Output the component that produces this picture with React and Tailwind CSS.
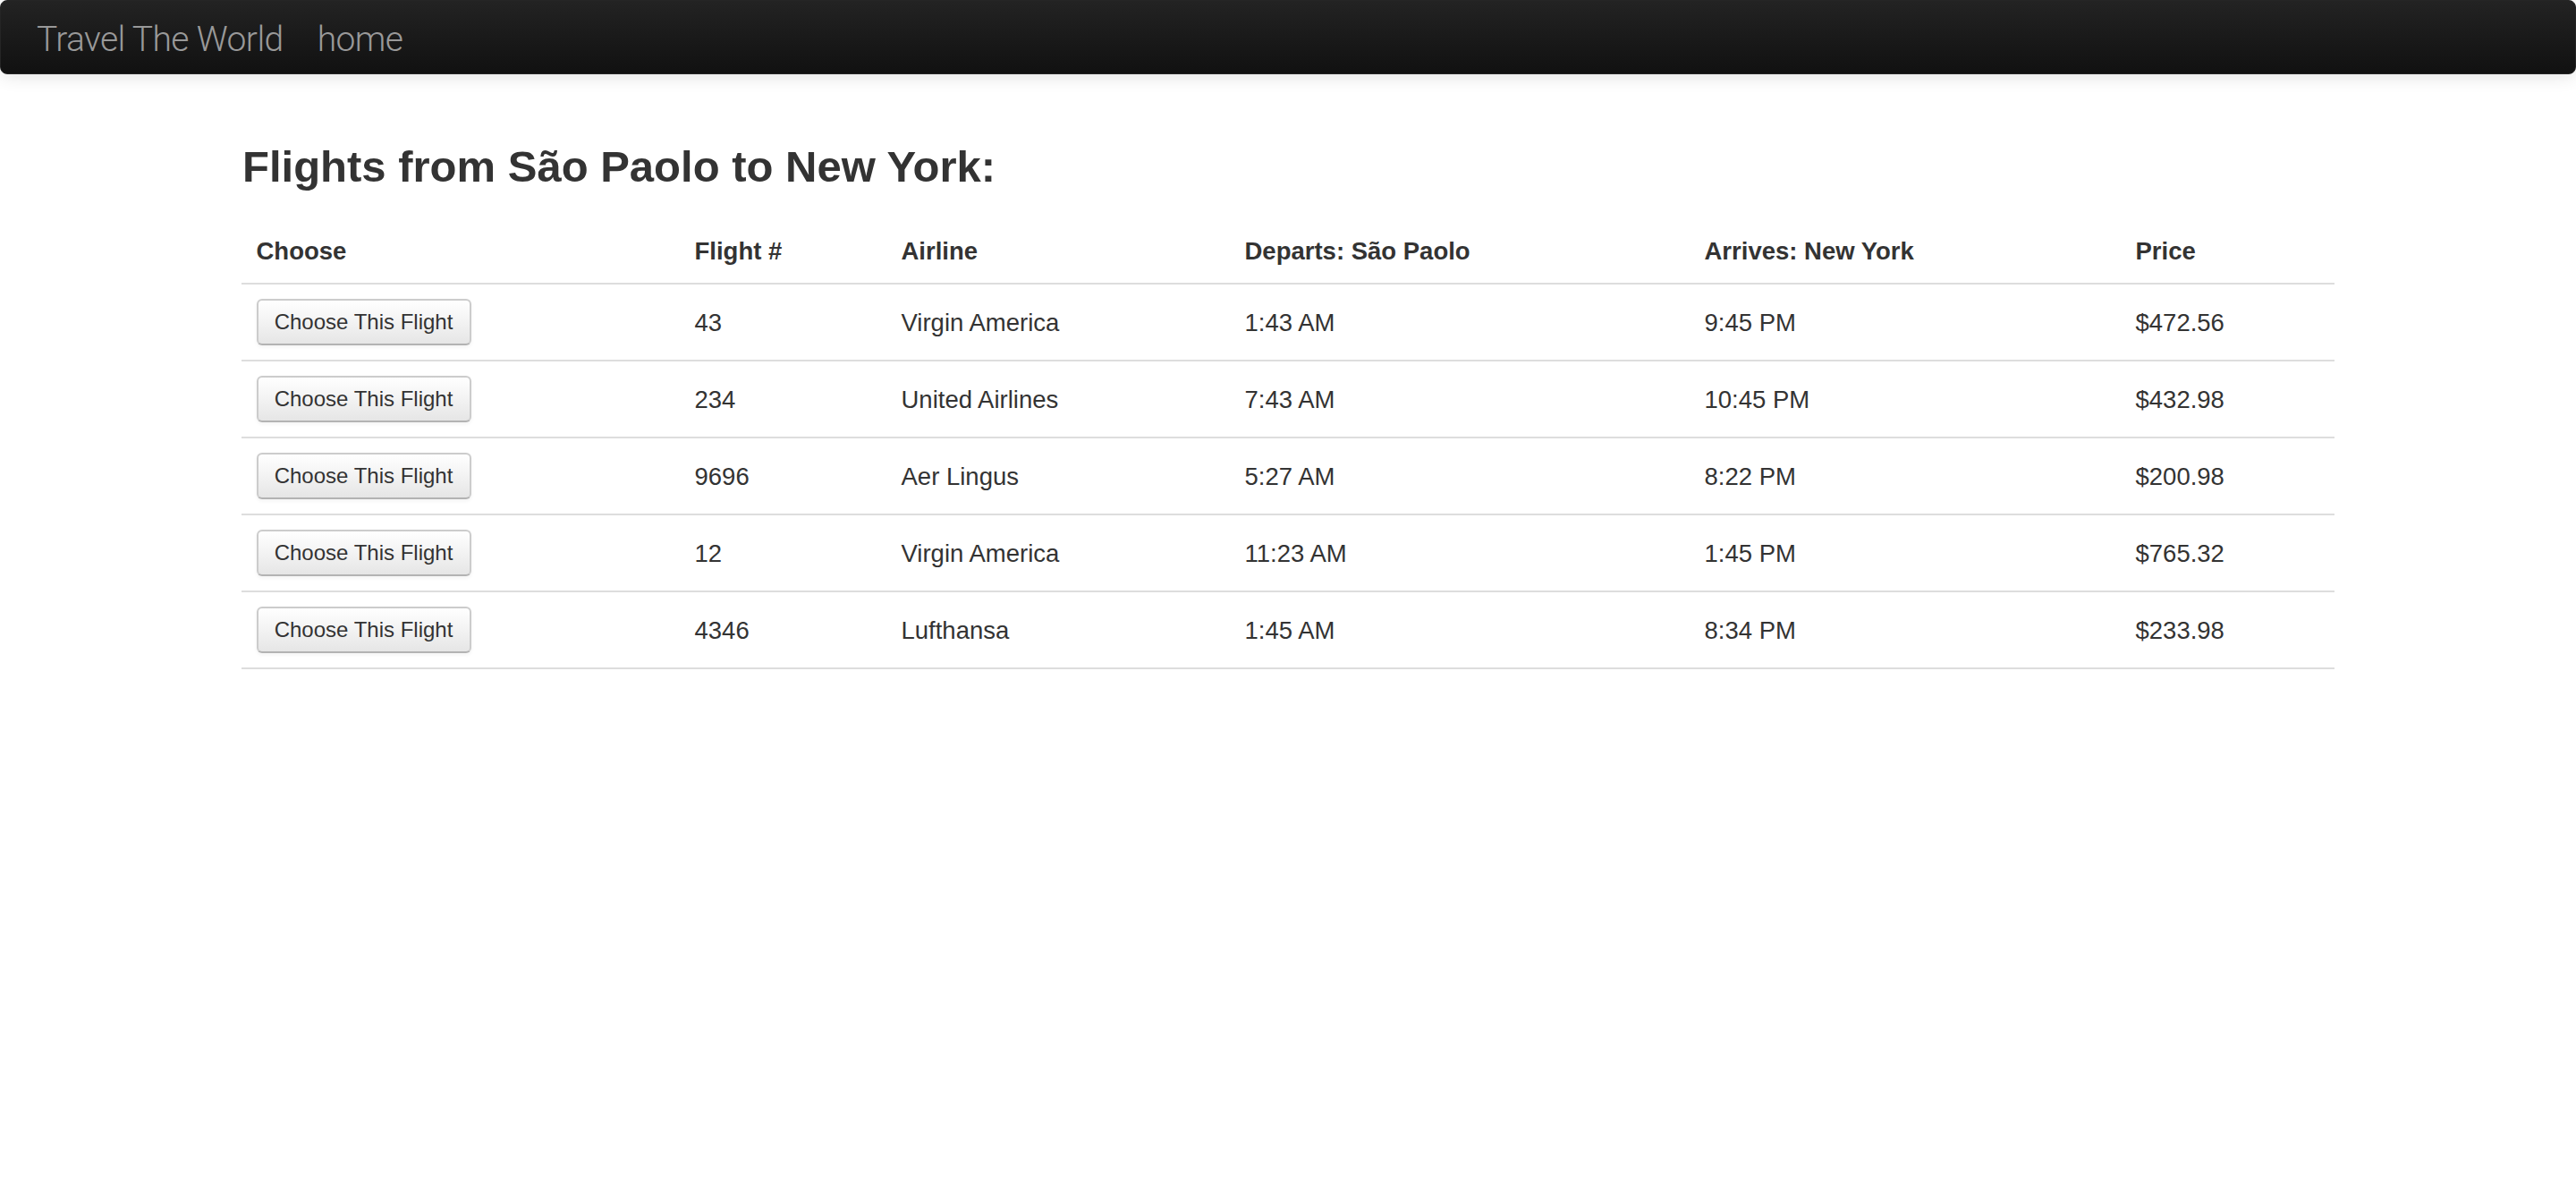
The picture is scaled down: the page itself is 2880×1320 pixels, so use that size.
import React from "react";

const flights = [
  { num: "43", airline: "Virgin America", dep: "1:43 AM", arr: "9:45 PM", price: "$472.56" },
  { num: "234", airline: "United Airlines", dep: "7:43 AM", arr: "10:45 PM", price: "$432.98" },
  { num: "9696", airline: "Aer Lingus", dep: "5:27 AM", arr: "8:22 PM", price: "$200.98" },
  { num: "12", airline: "Virgin America", dep: "11:23 AM", arr: "1:45 PM", price: "$765.32" },
  { num: "4346", airline: "Lufthansa", dep: "1:45 AM", arr: "8:34 PM", price: "$233.98" },
];

export default function App() {
  return (
    <div className="min-h-[1320px] bg-white text-[#333333] font-['Liberation_Sans',Arial,sans-serif]">
      <nav className="h-[83px] rounded-[8px] border border-[#252525] bg-gradient-to-b from-[#232323] to-[#111111] shadow-[0_2px_20px_rgba(0,0,0,0.12)] flex items-center pl-[40px] pt-[6px] font-['Roboto',sans-serif] font-light text-[#999999]">
        <span className="text-[39px] leading-[39px] tracking-[-0.6px]">Travel The World</span>
        <span className="ml-[38px] text-[39px] leading-[39px] tracking-[-0.6px]">home</span>
      </nav>
      <div className="mx-auto w-[2340px] pt-[79px]">
        <h3 className="text-[49px] leading-[48px] font-bold text-[#333333] pl-[1px] mb-[35px]">
          Flights from São Paolo to New York:
        </h3>
        <table className="w-[2340px] table-fixed border-collapse text-[27.5px] leading-[39px]">
          <colgroup>
            <col className="w-[490px]" />
            <col className="w-[231px]" />
            <col className="w-[384px]" />
            <col className="w-[514px]" />
            <col className="w-[482px]" />
            <col className="w-[239px]" />
          </colgroup>
          <thead>
            <tr className="border-b-2 border-[#dddddd]">
              <th className="text-left font-bold px-[16.5px] pt-[16px] pb-[16px] align-bottom">Choose</th>
              <th className="text-left font-bold px-[16.5px] pt-[16px] pb-[16px] align-bottom">Flight #</th>
              <th className="text-left font-bold px-[16.5px] pt-[16px] pb-[16px] align-bottom">Airline</th>
              <th className="text-left font-bold px-[16.5px] pt-[16px] pb-[16px] align-bottom">Departs: São Paolo</th>
              <th className="text-left font-bold px-[16.5px] pt-[16px] pb-[16px] align-bottom">Arrives: New York</th>
              <th className="text-left font-bold px-[16.5px] pt-[16px] pb-[16px] align-bottom">Price</th>
            </tr>
          </thead>
          <tbody>
            {flights.map((f, i) => (
              <tr key={i} className="border-b-2 border-[#dddddd]">
                <td className="px-[16.5px] py-[16px] align-middle">
                  <button className="h-[52px] w-[240px] rounded-[6px] border-2 border-[#cccccc] border-b-[#b3b3b3] bg-gradient-to-b from-white to-[#e6e6e6] text-[24px] leading-[30px] text-[#333333] shadow-[inset_0_2px_0_rgba(255,255,255,0.2),0_2px_4px_rgba(0,0,0,0.05)]">
                    Choose This Flight
                  </button>
                </td>
                <td className="px-[16.5px] py-[16px] align-middle">{f.num}</td>
                <td className="px-[16.5px] py-[16px] align-middle">{f.airline}</td>
                <td className="px-[16.5px] py-[16px] align-middle">{f.dep}</td>
                <td className="px-[16.5px] py-[16px] align-middle">{f.arr}</td>
                <td className="px-[16.5px] py-[16px] align-middle">{f.price}</td>
              </tr>
            ))}
          </tbody>
        </table>
      </div>
    </div>
  );
}
